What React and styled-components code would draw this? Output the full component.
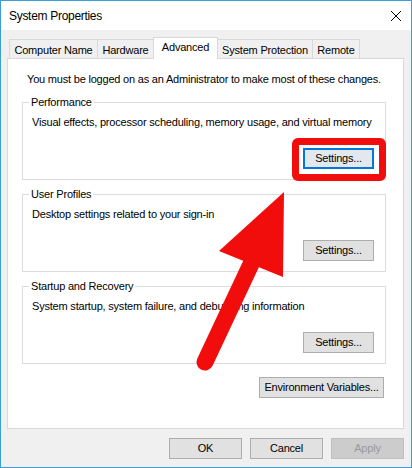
import React from 'react';
import styled, { createGlobalStyle } from 'styled-components';

const GlobalStyle = createGlobalStyle`
  html, body {
    margin: 0;
    padding: 0;
    background: #f0f0f0;
  }
  body {
    font-family: "Liberation Sans", Arial, sans-serif;
    font-size: 11px;
    letter-spacing: -0.2px;
    color: #000;
  }
`;

const Window = styled.div`
  position: relative;
  box-sizing: border-box;
  width: 412px;
  height: 468px;
  border: 1px solid #3a9fd6;
  background: #f0f0f0;
  display: flex;
  flex-direction: column;
  overflow: hidden;
`;

const TitleBar = styled.div`
  flex: none;
  height: 29px;
  display: flex;
  align-items: center;
  justify-content: space-between;
  padding: 0 9px 0 8px;
  background: #fff;
  font-size: 12px;
  letter-spacing: -0.3px;
`;

const Body = styled.div`
  flex: 1;
  display: flex;
  flex-direction: column;
  padding: 9px 7px 0 6px;
`;

const Tabs = styled.div`
  display: flex;
  align-items: flex-end;
  height: 20px;
  margin: 0 0 -1px 2px;
  position: relative;
  z-index: 1;
`;

const Tab = styled.div`
  box-sizing: border-box;
  width: ${(p) => p.$w}px;
  height: ${(p) => (p.$active ? '22px' : '19px')};
  margin-left: -1px;
  margin-bottom: ${(p) => (p.$active ? '0' : '1px')};
  padding-top: ${(p) => (p.$active ? '2px' : '3px')};
  border: 1px solid #d9d9d9;
  border-bottom: none;
  background: ${(p) => (p.$active ? '#fff' : '#f0f0f0')};
  line-height: 14px;
  text-align: center;
  white-space: nowrap;
  &:first-child {
    margin-left: 0;
  }
`;

const Panel = styled.div`
  box-sizing: border-box;
  height: 371px;
  flex: none;
  background: #fff;
  border: 1px solid #d9d9d9;
  padding: 13px 17px 0 14px;
  display: flex;
  flex-direction: column;
`;

const Notice = styled.div`
  line-height: 15px;
  margin-left: 5px;
  white-space: nowrap;
`;

const Group = styled.fieldset`
  margin: 7px 0 0;
  padding: 0 11px 10px 9px;
  border: 1px solid #dcdcdc;
  min-width: 0;
  &:first-of-type {
    margin-top: 8px;
  }
`;

const Legend = styled.legend`
  margin-left: -3px;
  padding: 0 2px;
  line-height: 15px;
`;

const Desc = styled.div`
  margin-top: 5px;
  line-height: 15px;
  white-space: nowrap;
`;

const ButtonRow = styled.div`
  display: flex;
  justify-content: flex-end;
  gap: 8px;
  margin-top: ${(p) => p.$top || 18}px;
  padding-right: ${(p) => p.$right || 0}px;
`;

const Button = styled.button`
  box-sizing: border-box;
  width: ${(p) => p.$w}px;
  height: 21px;
  padding: 0;
  border: 1px solid ${(p) => (p.disabled ? '#bfbfbf' : '#adadad')};
  background: ${(p) => (p.disabled ? '#cccccc' : '#e1e1e1')};
  color: ${(p) => (p.disabled ? '#9a9a9a' : '#000')};
  font-family: inherit;
  font-size: 11px;
  letter-spacing: inherit;
  line-height: 19px;
  white-space: nowrap;
  ${(p) =>
    p.$focused &&
    `
    border: 1px solid #0078d7;
    box-shadow: inset 0 0 0 1px #0078d7;
    background: #e3e8ee;
  `}
`;

const Highlight = styled.span`
  position: relative;
  display: inline-flex;
  &::after {
    content: '';
    position: absolute;
    top: -10px;
    bottom: -12px;
    left: -11px;
    right: -12px;
    border: 7px solid #f20d0d;
    border-radius: 6px;
    pointer-events: none;
  }
`;

const Footer = styled.div`
  display: flex;
  justify-content: flex-end;
  gap: 8px;
  margin-top: 9px;
`;

const Overlay = styled.svg`
  position: absolute;
  top: -1px;
  left: -1px;
  width: 412px;
  height: 468px;
  pointer-events: none;
`;

const CloseIcon = () => (
  <svg width="12" height="12" viewBox="0 0 12 12">
    <path d="M1 1L11 11M11 1L1 11" stroke="#000" strokeWidth="1" fill="none" />
  </svg>
);

const tabs = [
  { label: 'Computer Name', w: 89 },
  { label: 'Hardware', w: 57 },
  { label: 'Advanced', w: 65, active: true },
  { label: 'System Protection', w: 96 },
  { label: 'Remote', w: 48 },
];

const SettingsGroup = ({ title, text, focused }) => (
  <Group>
    <Legend>{title}</Legend>
    <Desc>{text}</Desc>
    <ButtonRow>
      {focused ? (
        <Highlight>
          <Button $w={71} $focused>Settings...</Button>
        </Highlight>
      ) : (
        <Button $w={71}>Settings...</Button>
      )}
    </ButtonRow>
  </Group>
);

export default function App() {
  return (
    <Window>
      <GlobalStyle />
      <TitleBar>
        <span>System Properties</span>
        <CloseIcon />
      </TitleBar>
      <Body>
        <Tabs>
          {tabs.map((t) => (
            <Tab key={t.label} $w={t.w} $active={t.active}>{t.label}</Tab>
          ))}
        </Tabs>
        <Panel>
          <Notice>You must be logged on as an Administrator to make most of these changes.</Notice>
          <SettingsGroup
            title="Performance"
            text="Visual effects, processor scheduling, memory usage, and virtual memory"
            focused
          />
          <SettingsGroup title="User Profiles" text="Desktop settings related to your sign-in" />
          <SettingsGroup
            title="Startup and Recovery"
            text="System startup, system failure, and debugging information"
          />
          <ButtonRow $top={13} $right={2}>
            <Button $w={125}>Environment Variables...</Button>
          </ButtonRow>
        </Panel>
        <Footer>
          <Button $w={73}>OK</Button>
          <Button $w={73}>Cancel</Button>
          <Button $w={73} disabled>Apply</Button>
        </Footer>
      </Body>
      <Overlay viewBox="0 0 412 468">
        <line x1="205" y1="362" x2="252" y2="262" stroke="#f20d0d" strokeWidth="17" strokeLinecap="round" />
        <polygon points="284,192 219,251 283,277" fill="#f20d0d" />
      </Overlay>
    </Window>
  );
}
